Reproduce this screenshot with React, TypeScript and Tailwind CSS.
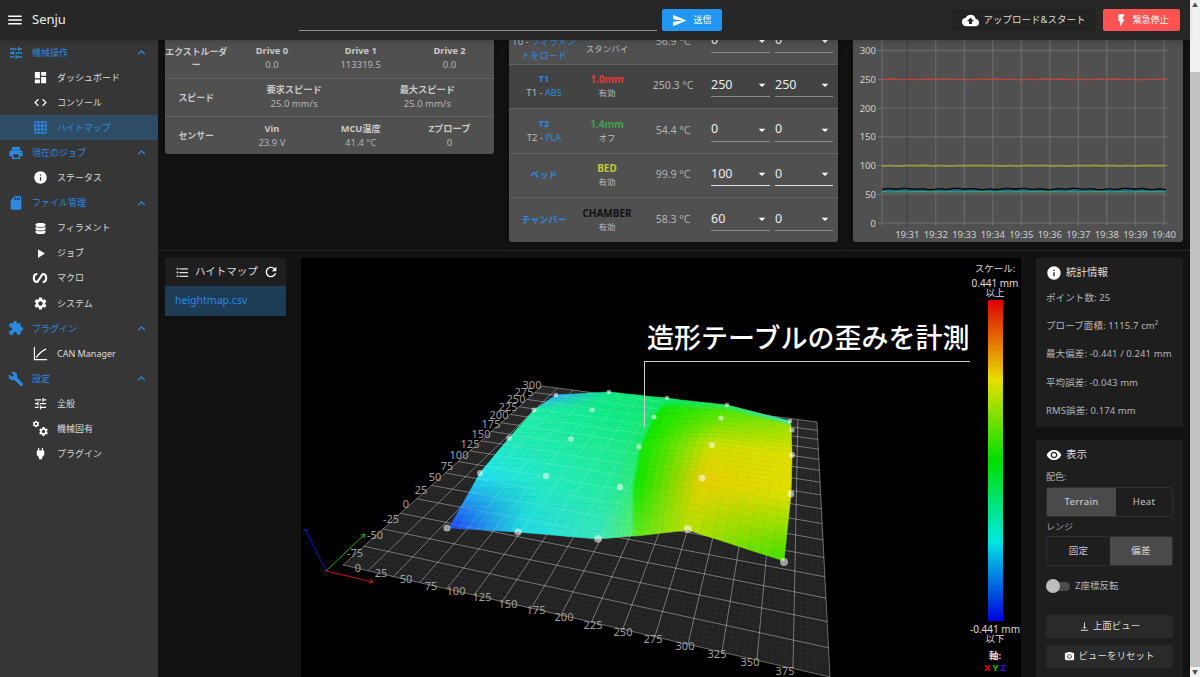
import type { ReactNode } from 'react';
import {
  MdBuild, MdCameraAlt, MdCloudUpload, MdCode, MdDashboard, MdExpandLess, MdExtension, MdFlashOn,
  MdFormatListBulleted, MdGridOn, MdInfo, MdMenu, MdPlayArrow, MdPower, MdPrint, MdRefresh, MdSdStorage,
  MdSend, MdSettings, MdTune, MdVerticalAlignBottom, MdVisibility, MdArrowDropDown,
} from 'react-icons/md';
import { FaDatabase } from 'react-icons/fa';

type Pt = [number, number];

function MacroIcon() {
  return (
    <svg viewBox="0 0 24 24" className="h-[16px] w-[16px]" fill="none" stroke="currentColor" strokeWidth="3.2">
      <path d="M8 6C1 6 1 18 8 18L16 6C23 6 23 18 16 18" />
    </svg>
  );
}

function CanIcon() {
  return (
    <svg viewBox="0 0 16 16" className="h-[15px] w-[15px]" fill="none" stroke="currentColor" strokeWidth="1.2">
      <path d="M1.5 1v13.5H15" />
      <path d="M3.500 12.500C6 8 9 5.500 14 3" strokeWidth="1.4" />
    </svg>
  );
}

function CogsIcon() {
  return (
    <span className="relative block h-[15px] w-[15px]">
      <MdSettings className="absolute left-[-1px] top-[-1px] h-[8px] w-[8px]" />
      <MdSettings className="absolute bottom-[-1px] right-[-1px] h-[11px] w-[11px]" />
    </span>
  );
}

const nav: { title: string; icon: ReactNode; items: { name: string; icon: ReactNode; active?: boolean }[] }[] = [
  {
    title: '機械操作',
    icon: <MdTune />,
    items: [
      { name: 'ダッシュボード', icon: <MdDashboard /> },
      { name: 'コンソール', icon: <MdCode /> },
      { name: 'ハイトマップ', icon: <MdGridOn />, active: true },
    ],
  },
  { title: '現在のジョブ', icon: <MdPrint />, items: [{ name: 'ステータス', icon: <MdInfo /> }] },
  {
    title: 'ファイル管理',
    icon: <MdSdStorage />,
    items: [
      { name: 'フィラメント', icon: <FaDatabase className="scale-75" /> },
      { name: 'ジョブ', icon: <MdPlayArrow /> },
      { name: 'マクロ', icon: <MacroIcon /> },
      { name: 'システム', icon: <MdSettings /> },
    ],
  },
  { title: 'プラグイン', icon: <MdExtension />, items: [{ name: 'CAN Manager', icon: <CanIcon /> }] },
  {
    title: '設定',
    icon: <MdBuild />,
    items: [
      { name: '全般', icon: <MdTune /> },
      { name: '機械固有', icon: <CogsIcon /> },
      { name: 'プラグイン', icon: <MdPower /> },
    ],
  },
];

function Sidebar() {
  return (
    <aside className="w-[158px] shrink-0 bg-[#363636] text-[9px]">
      {nav.map((group) => (
        <div key={group.title}>
          <div className="flex h-[25.08px] items-center text-[#2a8ae0]">
            <span className="flex w-[32px] justify-center text-[16px]">{group.icon}</span>
            <span className="flex-1">{group.title}</span>
            <MdExpandLess className="mr-[9px] text-[15px]" />
          </div>
          {group.items.map((item) => (
            <div
              key={item.name}
              className={`flex h-[25.08px] items-center ${item.active ? 'bg-[#2e4c63] text-[#2a8ae0]' : 'text-[#dddddd]'}`}
            >
              <span className={`ml-[32px] flex w-[16px] justify-center text-[15px] ${item.active ? '' : 'text-white'}`}>
                {item.icon}
              </span>
              <span className="ml-[9px]">{item.name}</span>
            </div>
          ))}
        </div>
      ))}
    </aside>
  );
}

function Header() {
  return (
    <header className="relative z-10 flex h-[40px] shrink-0 items-center bg-[#272727] shadow-md">
      <MdMenu className="ml-[6px] text-[18px] text-white" />
      <span className="ml-[8px] w-[267px] text-[13px] text-[#eeeeee]">Senju</span>
      <div className="mt-[21px] h-px w-[358px] bg-[#8f8f8f]" />
      <button className="ml-[5px] flex h-[22px] w-[60px] items-center justify-center gap-[6px] rounded-[2px] bg-[#2196f3] text-[9px] text-white">
        <MdSend className="text-[15px]" />
        送信
      </button>
      <button className="ml-[230px] flex h-[22px] w-[143px] items-center justify-center gap-[5px] rounded-[2px] bg-[#222222] text-[9.5px] text-[#dddddd]">
        <MdCloudUpload className="text-[17px] text-white" />
        アップロード&スタート
      </button>
      <button className="ml-[8px] flex h-[22px] w-[77px] items-center justify-center gap-[3px] rounded-[2px] bg-[#ff5252] text-[9px] text-white">
        <MdFlashOn className="text-[15px]" />
        緊急停止
      </button>
    </header>
  );
}

const statusRows = [
  {
    label: ['エクストルーダ', 'ー'],
    cols: [['Drive 0', '0.0'], ['Drive 1', '113319.5'], ['Drive 2', '0.0']],
  },
  { label: ['スピード'], cols: [['要求スピード', '25.0 mm/s'], ['最大スピード', '25.0 mm/s']] },
  { label: ['センサー'], cols: [['Vin', '23.9 V'], ['MCU温度', '41.4 °C'], ['Zプローブ', '0']] },
];

function StatusCard() {
  return (
    <div className="h-[134px] w-[329px] rounded-b-[3px] bg-[#505050] pt-[19px] text-[9.5px] shadow-md">
      {statusRows.map((row, i) => (
        <div key={i} className={`flex h-[38.5px] items-center text-center ${i ? 'border-t border-[#616161]' : ''}`}>
          <div className="w-[62.5px] shrink-0 whitespace-nowrap text-[8.9px] font-bold leading-[13px] text-[#c8c8c8]">
            {row.label.map((l) => (
              <div key={l}>{l}</div>
            ))}
          </div>
          {row.cols.map(([head, value]) => (
            <div key={head} className="flex-1 leading-[14px]">
              <div className="text-[9.25px] font-bold text-[#c8c8c8]">{head}</div>
              <div className="text-[#b4b4b4]">{value}</div>
            </div>
          ))}
        </div>
      ))}
    </div>
  );
}

const toolRows = [
  { name: '\u00a0', sub: 'T0 - ', link: 'フィラメントをロード', state: '\u00a0', stateCls: 'text-[#cccccc]', mode: 'スタンバイ', temp: '56.9 °C', a: '0', b: '0', bg: '' },
  { name: 'T1', sub: 'T1 - ', link: 'ABS', state: '1.0mm', stateCls: 'text-[#e53935]', mode: '有効', temp: '250.3 °C', a: '250', b: '250', bg: 'bg-[#434343]' },
  { name: 'T2', sub: 'T2 - ', link: 'PLA', state: '1.4mm', stateCls: 'text-[#43a047]', mode: 'オフ', temp: '54.4 °C', a: '0', b: '0', bg: '' },
  { name: 'ベッド', sub: '', link: '', state: 'BED', stateCls: 'text-[#c0ca33]', mode: '有効', temp: '99.9 °C', a: '100', b: '0', bg: '', bright: true },
  { name: 'チャンバー', sub: '', link: '', state: 'CHAMBER', stateCls: 'text-[#111111]', mode: '有効', temp: '58.3 °C', a: '60', b: '0', bg: '' },
];

function TempSelect({ value, width, bright }: { value: string; width: string; bright?: boolean }) {
  return (
    <div className={`flex h-[22px] items-center justify-between border-b pb-[1px] text-[12.5px] text-[#eeeeee] ${width} ${bright ? 'border-[#dddddd]' : 'border-[#8a8a8a]'}`}>
      <span>{value}</span>
      <MdArrowDropDown className="text-[16px] text-white" />
    </div>
  );
}

function ToolCard() {
  return (
    <div className="h-[222px] w-[329px] rounded-b-[3px] bg-[#505050] text-[9.5px] shadow-md">
      {toolRows.map((row) => (
        <div key={row.temp} className={`flex h-[44.5px] items-center border-b border-[#636363] last:border-b-0 ${row.bg}`}>
          <div className="w-[70px] shrink-0 px-[3px] text-center leading-[14px]">
            <div className="text-[9px] font-bold text-[#2a8ae0]">{row.name}</div>
            {row.sub && (
              <div className="text-[9.5px] text-[#bbbbbb]">
                {row.sub}
                <span className="text-[9px] text-[#2a8ae0]">{row.link}</span>
              </div>
            )}
          </div>
          <div className="w-[56px] shrink-0 text-center leading-[14px]">
            <div className={`text-[10px] font-bold ${row.stateCls}`}>{row.state}</div>
            <div className="text-[8.5px] text-[#bbbbbb]">{row.mode}</div>
          </div>
          <div className="w-[76px] shrink-0 text-center text-[10.5px] text-[#b4b4b4]">{row.temp}</div>
          <div className="flex gap-[5px]">
            <TempSelect value={row.a} width="w-[59px]" bright={row.bright} />
            <TempSelect value={row.b} width="w-[58px]" bright={row.bright} />
          </div>
        </div>
      ))}
    </div>
  );
}

const xTimes = ['19:31', '19:32', '19:33', '19:34', '19:35', '19:36', '19:37', '19:38', '19:39', '19:40'];
const yTicks = [0, 50, 100, 150, 200, 250, 300];

function jitter(base: number, amp: number, seed: number) {
  const pts: string[] = [];
  for (let x = 882; x <= 1167; x += 2) {
    const y = base + amp * (Math.sin(x * 0.37 + seed) * 0.5 + Math.sin(x * 0.11 + seed * 2) * 0.5);
    pts.push(`${x},${y.toFixed(1)}`);
  }
  return pts.join(' ');
}

function ChartCard() {
  return (
    <div className="h-[222px] w-[330px] rounded-b-[3px] bg-[#505050] shadow-md">
      <svg viewBox="853 20 330 222" className="block h-full w-full" fontFamily="Noto Sans" fontSize="9.5" fill="#cfcfcf">
        {yTicks.map((t) => {
          const y = 223 - t * 0.5745;
          return (
            <g key={t}>
              <line x1="878" x2="1168" y1={y} y2={y} stroke="#6e6e6e" />
              <text x="876" y={y + 3.5} textAnchor="end">{t}</text>
            </g>
          );
        })}
        <line x1="882" x2="882" y1="40" y2="226" stroke="#6e6e6e" />
        {xTimes.map((t, i) => {
          const x = 907.3 + i * 28.5;
          return (
            <g key={t}>
              <line x1={x} x2={x} y1="40" y2="226" stroke={i === 0 ? '#3f3f3f' : '#6e6e6e'} />
              <text x={x} y="238" textAnchor="middle">{t}</text>
            </g>
          );
        })}
        <polyline points={jitter(79.3, 0.7, 1)} fill="none" stroke="#d43c2c" strokeWidth="1.1" />
        <polyline points={jitter(165.7, 0.2, 2)} fill="none" stroke="#9a9a40" strokeWidth="1.8" />
        <polyline points={jitter(191.7, 0.1, 4)} fill="none" stroke="#3f9f50" strokeWidth="1.6" />
        <polyline points={jitter(190.3, 0.2, 5)} fill="none" stroke="#1565a0" strokeWidth="1.6" />
        <polyline points={jitter(189, 0.7, 3)} fill="none" stroke="#000000" strokeWidth="1.3" />
      </svg>
    </div>
  );
}

// 床面の透視変換
function floorMap(p0: Pt, p1: Pt, p2: Pt, p3: Pt) {
  const dx1 = p1[0] - p2[0];
  const dx2 = p3[0] - p2[0];
  const sx = p0[0] - p1[0] + p2[0] - p3[0];
  const dy1 = p1[1] - p2[1];
  const dy2 = p3[1] - p2[1];
  const sy = p0[1] - p1[1] + p2[1] - p3[1];
  const den = dx1 * dy2 - dx2 * dy1;
  const g = (sx * dy2 - dx2 * sy) / den;
  const h = (dx1 * sy - sx * dy1) / den;
  const a = p1[0] - p0[0] + g * p1[0];
  const b = p3[0] - p0[0] + h * p3[0];
  const d = p1[1] - p0[1] + g * p1[1];
  const e = p3[1] - p0[1] + h * p3[1];
  return (u: number, v: number): Pt => {
    const w = g * u + h * v + 1;
    return [(a * u + b * v + p0[0]) / w, (d * u + e * v + p0[1]) / w];
  };
}

const floorCorners: [Pt, Pt, Pt, Pt] = [[343, 565], [830, 677], [817, 422], [542, 386]];

const meshPts: Pt[][] = [
  [[449, 528], [518, 532], [598, 539], [632, 536], [636, 536], [688, 530], [784, 561]],
  [[480, 473], [546, 476], [610, 485], [631, 488], [636, 488], [702, 478], [791, 494]],
  [[509, 438], [571, 439], [625, 446], [639, 447], [643, 447], [712, 445], [792, 455]],
  [[534, 410], [592, 410], [640, 416], [653, 417], [660, 408], [725, 411], [791, 426]],
  [[556, 395], [609, 392], [655, 397], [667, 398], [680, 400], [727, 405], [790, 421]],
];

const meshCols: string[][] = [
  ['#2040f0', '#20d8e8', '#38e8c0', '#58ee70', '#60e820', '#b8e000', '#40e000'],
  ['#20e8f0', '#24ecc0', '#24eca0', '#30ee80', '#10e800', '#e8d000', '#e0e000'],
  ['#24ecb8', '#1ceca0', '#1cec88', '#20ee70', '#10e800', '#d0e000', '#e0e000'],
  ['#20eca8', '#10ec90', '#10ec78', '#10ee60', '#10e800', '#50e800', '#a0e400'],
  ['#30b0f8', '#10ec88', '#10ec70', '#10ec68', '#10ec68', '#30ec68', '#30ecc8'],
];

const probes: [number, number, number][] = [
  [447, 528, 3.6], [518, 532, 3.6], [598, 539, 3.8], [688, 529, 4], [784, 562, 4],
  [480, 473, 3], [546, 476, 3.2], [620, 487, 3.2], [702, 478, 3.4], [791, 494, 3.4],
  [509, 438, 2.7], [571, 439, 2.8], [639, 447, 2.7], [712, 445, 3], [792, 455, 3],
  [534, 410, 2.5], [592, 410, 2.5], [654, 417, 2.5], [721, 418, 2.6], [792, 430, 2.6],
  [556, 395, 2.3], [609, 392, 2.3], [667, 398, 2.3], [727, 405, 2.3], [790, 421, 2.3],
];

function hex(c: string) {
  return [parseInt(c.slice(1, 3), 16), parseInt(c.slice(3, 5), 16), parseInt(c.slice(5, 7), 16)];
}

function Mesh() {
  const quads: { pts: string; fill: string }[] = [];
  const n = 8;
  for (let r = 0; r < meshPts.length - 1; r++) {
    for (let c = 0; c < meshPts[0].length - 1; c++) {
      const at = (s: number, t: number): Pt => {
        const f = (i: 0 | 1) =>
          (1 - t) * ((1 - s) * meshPts[r][c][i] + s * meshPts[r][c + 1][i]) +
          t * ((1 - s) * meshPts[r + 1][c][i] + s * meshPts[r + 1][c + 1][i]);
        return [f(0), f(1)];
      };
      const [c00, c10, c01, c11] = [meshCols[r][c], meshCols[r][c + 1], meshCols[r + 1][c], meshCols[r + 1][c + 1]].map(hex);
      for (let i = 0; i < n; i++) {
        for (let j = 0; j < n; j++) {
          const s = (i + 0.5) / n;
          const t = (j + 0.5) / n;
          const col = [0, 1, 2].map((k) =>
            Math.round((1 - t) * ((1 - s) * c00[k] + s * c10[k]) + t * ((1 - s) * c01[k] + s * c11[k])),
          );
          const corners = [at(i / n, j / n), at((i + 1) / n, j / n), at((i + 1) / n, (j + 1) / n), at(i / n, (j + 1) / n)];
          quads.push({
            pts: corners.map((p) => `${p[0].toFixed(1)},${p[1].toFixed(1)}`).join(' '),
            fill: `rgb(${col.join(',')})`,
          });
        }
      }
    }
  }
  return (
    <g>
      {quads.map((q, i) => (
        <polygon key={i} points={q.pts} fill={q.fill} stroke={q.fill} strokeWidth="0.6" />
      ))}
    </g>
  );
}

// 軸ラベル (中心座標)
const yLabels: [string, number, number][] = [
  ['0', 358, 568], ['-75', 355, 553], ['-50', 375, 535], ['-25', 391, 519], ['0', 406, 504], ['25', 421, 490],
  ['50', 435, 477], ['75', 447, 466], ['100', 459, 455], ['125', 470, 444], ['150', 481, 434], ['175', 491, 424],
  ['200', 499, 415], ['225', 508, 407], ['250', 516, 399], ['275', 524, 392], ['300', 532, 385],
];
const xLabels: [string, number, number][] = [
  ['25', 381, 573], ['50', 406, 579], ['75', 431, 586], ['100', 456, 591], ['125', 482, 597], ['150', 508, 604],
  ['175', 536, 610], ['200', 564, 617], ['225', 593, 625], ['250', 623, 632], ['275', 653, 639], ['300', 685, 646],
  ['325', 717, 654], ['350', 750, 662], ['375', 785, 671],
];

function HeightMap3D() {
  const map = floorMap(...floorCorners);
  const grid: [Pt, Pt][] = [];
  const fine: [Pt, Pt][] = [];
  for (let i = 0; i <= 16; i++) {
    grid.push([map(i / 16, 0), map(i / 16, 1)]);
    grid.push([map(0, i / 16), map(1, i / 16)]);
  }
  for (let i = 0; i <= 80; i++) {
    if (i % 5) {
      fine.push([map(i / 80, 0), map(i / 80, 1)]);
      fine.push([map(0, i / 80), map(1, i / 80)]);
    }
  }
  const leftOutline = [
    ...meshPts.map((r) => r[0]),
    ...[...meshPts].reverse().map((r) => r[3]),
  ];
  return (
    <svg viewBox="301 258 720 419" className="block h-[419px] w-[720px]" fontFamily="Noto Sans" fontSize="11" fill="#a0a0a0" textAnchor="middle">
      <defs>
        <clipPath id="mesh-left">
          <polygon points={leftOutline.map((p) => p.join(',')).join(' ')} />
        </clipPath>
      </defs>
      <polygon points={floorCorners.map((p) => p.join(',')).join(' ')} fill="#222222" />
      {fine.map(([a, b], i) => (
        <line key={i} x1={a[0]} y1={a[1]} x2={b[0]} y2={b[1]} stroke="#ffffff" strokeOpacity="0.05" strokeWidth="0.7" />
      ))}
      {grid.map(([a, b], i) => (
        <line key={i} x1={a[0]} y1={a[1]} x2={b[0]} y2={b[1]} stroke="#ffffff" strokeOpacity="0.55" strokeWidth="0.7" />
      ))}
      <Mesh />
      {/* 半透明メッシュ越しのグリッド */}
      <g clipPath="url(#mesh-left)">
        {grid.map(([a, b], i) => (
          <line key={i} x1={a[0]} y1={a[1]} x2={b[0]} y2={b[1]} stroke="#ffffff" strokeOpacity="0.18" strokeWidth="0.7" />
        ))}
      </g>
      {probes.map(([x, y, r]) => (
        <circle key={`${x}-${y}`} cx={x} cy={y} r={r} fill="#ffffff" fillOpacity="0.55" />
      ))}
      {[...yLabels, ...xLabels].map(([t, x, y]) => (
        <text key={`${t}-${x}`} x={x} y={y + 4}>{t}</text>
      ))}
      <g fill="none" strokeWidth="1">
        <path d="M326 571L305 529M305 529l-1.500 3M305 529l3 2" stroke="#1414c8" />
        <path d="M326 571L365 534M365 534l-4 1M365 534l-1 4" stroke="#14b414" />
        <path d="M326 571L373 582M373 582l-3-3M373 582l-4 1" stroke="#c81414" />
      </g>
    </svg>
  );
}

function ScaleBar() {
  return (
    <div className="absolute left-[665px] top-[5px] flex w-[58px] flex-col items-center text-[10px] leading-[10px] text-[#dddddd]">
      <div className="mb-[4px] text-[9.5px] leading-[11px]">スケール:</div>
      <div className="whitespace-nowrap">0.441 mm</div>
      <div className="text-[9.5px]">以上</div>
      <div className="my-[2px] h-[321px] w-[15px] bg-[linear-gradient(to_bottom,#e00000_0%,#e8e000_25%,#00e000_50%,#00e8e0_75%,#0000e0_100%)]" />
      <div className="mt-[1px] whitespace-nowrap">-0.441 mm</div>
      <div className="text-[9.5px]">以下</div>
      <div className="mt-[7px] text-[9.5px] font-bold">軸:</div>
      <div className="mt-[2px] flex gap-[2px] text-[9.5px] font-bold">
        <span className="text-[#e00000]">X</span>
        <span className="text-[#00c000]">Y</span>
        <span className="text-[#1a1ae0]">Z</span>
      </div>
    </div>
  );
}

function Canvas() {
  return (
    <div className="relative h-[419px] w-[720px] shrink-0 overflow-hidden bg-black">
      <HeightMap3D />
      <div className="absolute left-[346px] top-[63px] whitespace-nowrap text-[27px] font-medium leading-[34px] text-white">
        造形テーブルの歪みを計測
      </div>
      <div className="absolute left-[343px] top-[103px] h-[67px] w-[326px] border-l border-t border-[#d0d0d0]" />
      <ScaleBar />
    </div>
  );
}

function FileList() {
  return (
    <div className="w-[121px] shrink-0">
      <div className="flex h-[28px] items-center bg-[#1e1e1e] pl-[10px] text-[10.5px] text-[#dddddd]">
        <MdFormatListBulleted className="text-[15px]" />
        <span className="ml-[5px] w-[68px]">ハイトマップ</span>
        <MdRefresh className="text-[16px] text-white" />
      </div>
      <div className="flex h-[30px] items-center bg-[#1d3c56] pl-[10px] text-[10.5px] text-[#2a8ae0] shadow-md">heightmap.csv</div>
    </div>
  );
}

function Segmented({ left, right, active }: { left: [string, string]; right: [string, string]; active: 0 | 1 }) {
  return (
    <div className="flex h-[30px] overflow-hidden rounded-[2px] border border-[#2e2e2e] text-center text-[9.5px] leading-[28px] tracking-[0.3px] text-[#c8c8c8]">
      <div className={`${left[1]} ${active === 0 ? 'bg-[#4a4a4a] font-medium' : ''}`}>{left[0]}</div>
      <div className={`${right[1]} ${active === 1 ? 'bg-[#4a4a4a] font-medium' : ''}`}>{right[0]}</div>
    </div>
  );
}

const stats = ['ポイント数: 25', 'プローブ面積: 1115.7 cm²', '最大偏差: -0.441 / 0.241 mm', '平均誤差: -0.043 mm', 'RMS誤差: 0.174 mm'];

function RightPanel() {
  return (
    <div className="flex w-[147px] shrink-0 flex-col gap-[13px]">
      <div className="h-[169px] bg-[#1e1e1e] px-[10px] pt-[6px]">
        <div className="flex h-[18px] items-center gap-[4px] text-[10.5px] text-[#dddddd]">
          <MdInfo className="text-[16px] text-white" />
          統計情報
        </div>
        <div className="mt-[2px] flex flex-col text-[9.5px] tracking-[0.1px] text-[#b4b4b4]">
          {stats.map((s) => (
            <div key={s} className="flex h-[28.2px] items-center whitespace-nowrap">{s}</div>
          ))}
        </div>
      </div>
      <div className="h-[240px] bg-[#1e1e1e] px-[10px] pt-[6px]">
        <div className="flex h-[18px] items-center gap-[4px] text-[10.5px] text-[#dddddd]">
          <MdVisibility className="text-[16px] text-white" />
          表示
        </div>
        <div className="mt-[6px] h-[17px] text-[9px] text-[#b4b4b4]">配色:</div>
        <Segmented left={['Terrain', 'w-[69px]']} right={['Heat', 'flex-1']} active={0} />
        <div className="mt-[3px] h-[16px] text-[9px] text-[#999999]">レンジ</div>
        <Segmented left={['固定', 'w-[63px]']} right={['偏差', 'flex-1']} active={1} />
        <div className="mt-[13px] flex h-[14px] items-center">
          <span className="relative h-[9px] w-[24px] rounded-full bg-[#4a4a4a]">
            <span className="absolute left-0 top-[-3px] h-[14px] w-[14px] rounded-full bg-[#bdbdbd]" />
          </span>
          <span className="ml-[5px] text-[9.5px] text-[#b4b4b4]">Z座標反転</span>
        </div>
        <button className="mt-[22px] flex h-[23px] w-full items-center justify-center gap-[3px] rounded-[2px] bg-[#2a2a2a] text-[9.5px] text-[#dddddd]">
          <MdVerticalAlignBottom className="text-[11px]" />
          上面ビュー
        </button>
        <button className="mt-[7px] flex h-[23px] w-full items-center justify-center gap-[3px] rounded-[2px] bg-[#2a2a2a] text-[9.5px] text-[#dddddd]">
          <MdCameraAlt className="text-[11px] text-white" />
          ビューをリセット
        </button>
      </div>
    </div>
  );
}

function Scrollbar() {
  return (
    <div className="flex w-[10px] shrink-0 flex-col bg-[#f1f1f1]">
      <div className="flex h-[10px] items-center justify-center text-[6px] text-[#505050]">▲</div>
      <div className="h-[62px]" />
      <div className="h-[595px] bg-[#c1c1c1]" />
      <div className="flex h-[10px] items-center justify-center text-[6px] text-[#505050]">▼</div>
    </div>
  );
}

export default function App() {
  return (
    <div className="flex h-[677px] w-[1200px] overflow-hidden bg-[#121212] font-['Noto_Sans','Noto_Sans_CJK_JP',sans-serif]">
      <div className="flex min-w-0 flex-1 flex-col">
        <Header />
        <div className="flex min-h-0 flex-1">
          <Sidebar />
          <main className="min-w-0 flex-1 overflow-hidden">
            {/* スクロール済みの位置を再現 */}
            <div className="-mt-[30px]">
              <div className="flex h-[240px] items-start gap-[15px] px-[7px] pt-[10px]">
                <StatusCard />
                <ToolCard />
                <ChartCard />
              </div>
              <div className="flex items-start gap-[15px] border-t border-[#252525] px-[7px] pt-[7px]">
                <FileList />
                <Canvas />
                <RightPanel />
              </div>
            </div>
          </main>
        </div>
      </div>
      <Scrollbar />
    </div>
  );
}
